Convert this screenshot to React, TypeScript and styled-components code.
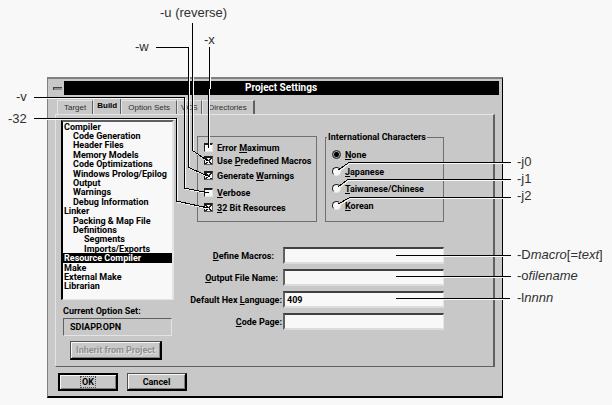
import React, { useState } from 'react';
import styled, { createGlobalStyle } from 'styled-components';

const face = '#c8c8c8';
const paper = '#f8f8f8';
const light = '#e4e4e4';
const dark = '#606060';

const GlobalStyle = createGlobalStyle`
  *, *::before, *::after { box-sizing: border-box; }
  body { margin: 0; background: ${paper}; }
  button, input, fieldset, legend { font: inherit; color: inherit; margin: 0; }
`;

const Figure = styled.main`
  position: relative;
  padding: 77px 109px 7px 47px;
  font: bold 9px/10px Roboto, 'Liberation Sans', Arial, sans-serif;
  color: #000;
`;

const Dialog = styled.section`
  padding: 2px 3px 5px;
  background: ${face};
  border: solid;
  border-width: 2px 1px 2px 1px;
  border-color: #808080 #000 #000 #808080;
`;

const TitleBar = styled.header`
  display: flex;
  height: 14px;
  background: #000;
  color: #fff;
`;

const SystemMenu = styled.button`
  display: grid;
  place-items: center;
  width: 13px;
  padding: 0;
  background: ${face};
  border: 0;
  &::after {
    content: '';
    width: 9px;
    height: 3px;
    background: #909090;
    border: solid #404040;
    border-width: 1px 0 0 1px;
  }
`;

const Title = styled.h1`
  flex: 1;
  margin: 0;
  padding-right: 1px;
  text-align: center;
  font-size: 10px;
  line-height: 14px;
`;

const Tabs = styled.div`
  display: flex;
  align-items: flex-end;
  height: 19px;
  padding-left: 6px;
`;

const Tab = styled.button<{ $active: boolean; $narrow: boolean }>`
  height: ${p => (p.$active ? 17 : 14)}px;
  padding: 0 ${p => (p.$narrow ? 3 : 6)}px;
  background: ${face};
  border: solid;
  border-width: 1px 1px 0 1px;
  border-color: ${light} ${dark} ${light} ${light};
  font-family: 'Liberation Sans', Arial, sans-serif;
  font-weight: ${p => (p.$active ? 'bold' : 'normal')};
  font-size: 8px;
  white-space: nowrap;
  color: ${p => (p.$active ? '#000' : '#303030')};
  &:last-child { border-right-width: 2px; }
`;

const Panel = styled.div`
  display: flex;
  gap: 15px;
  margin: 0 4px;
  padding: 5px 49px 6px 5px;
  border: solid;
  border-width: 1px 2px 1px 1px;
  border-color: ${light} ${dark} ${dark} ${light};
`;

const Sidebar = styled.div`
  display: flex;
  flex-direction: column;
  width: 113px;
`;

const Tree = styled.ul`
  display: grid;
  grid-template-rows: repeat(18, 1fr);
  height: 180px;
  margin: 0;
  padding: 0 0 8px;
  list-style: none;
  background: ${paper};
  border: solid;
  border-width: 2px 2px 1px 2px;
  border-color: ${dark} ${light} ${light} #000;
`;

const TreeItem = styled.li<{ $level: number; $selected: boolean }>`
  display: flex;
  align-items: center;
  min-height: 0;
  padding-left: ${p => [1, 10, 21][p.$level]}px;
  white-space: nowrap;
  cursor: default;
  background: ${p => (p.$selected ? '#000' : 'transparent')};
  color: ${p => (p.$selected ? '#fff' : '#000')};
`;

const Caption = styled.label`
  margin: 6px 0 2px 2px;
`;

const OptionSet = styled.output`
  height: 18px;
  margin: 0 2px;
  padding: 0 6px;
  line-height: 16px;
  border: 1px solid;
  border-color: ${dark} ${light} ${light} ${dark};
`;

const PushButton = styled.button<{ $default?: boolean }>`
  min-width: 60px;
  height: 18px;
  padding: 0 5px;
  line-height: 12px;
  white-space: nowrap;
  background: ${face};
  border: solid;
  border-width: ${p => (p.$default ? '2px' : '1px 2px 2px 1px')};
  border-color: ${p => (p.$default ? '#000' : '#505050 #000 #000 #505050')};
  box-shadow: inset 1px 1px 0 ${paper}, inset -1px -1px 0 #808080;
  &:disabled { color: #909090; text-shadow: 1px 1px 0 ${light}; }
`;

const Inherit = styled(PushButton)`
  align-self: flex-start;
  min-width: 91px;
  height: 19px;
  margin: 5px 0 0 9px;
`;

const Focus = styled.span`
  padding: 0 1px;
  outline: 1px dotted #505050;
`;

const Settings = styled.div`
  flex: 1;
  min-width: 0;
`;

const Groups = styled.div`
  display: grid;
  grid-template-columns: 120fr 119fr;
  align-items: end;
  gap: 8px;
  padding: 12px 0 0 8px;
`;

const Group = styled.fieldset`
  min-width: 0;
  padding: 4px 0 7px 6px;
  border: 1px solid #707070;
`;

const Legend = styled.legend`
  margin-left: -5px;
  padding: 0 1px;
  white-space: nowrap;
`;

const CheckRows = styled.div`
  display: grid;
  grid-template-rows: 13px 13px 17px 17px 13px;
`;

const RadioRows = styled.div`
  display: grid;
  grid-auto-rows: 17px;
`;

const Choice = styled.label`
  display: flex;
  align-items: center;
  gap: 4px;
  white-space: nowrap;
`;

const Check = styled.input.attrs({ type: 'checkbox' })`
  appearance: none;
  flex: none;
  width: 9px;
  height: 9px;
  background: ${paper};
  border: solid;
  border-width: 2px 1px 1px 1px;
  border-color: #202020 ${light} ${light} #202020;
  &:checked {
    border-color: #202020 #606060 #606060 #202020;
    background:
      linear-gradient(45deg, transparent 45%, #202020 46%, #202020 54%, transparent 55%),
      linear-gradient(-45deg, transparent 45%, #202020 46%, #202020 54%, transparent 55%),
      ${paper};
  }
`;

const Radio = styled.input.attrs({ type: 'radio' })`
  appearance: none;
  flex: none;
  width: 9px;
  height: 9px;
  border-radius: 50%;
  background: ${paper};
  border: 1px solid;
  border-color: #202020 ${light} ${light} #202020;
  &:checked {
    border-color: #202020;
    background: radial-gradient(circle, #000 0 2px, #a0a0a0 3px);
  }
`;

const Fields = styled.div`
  display: grid;
  gap: 5px;
  margin-top: 25px;
`;

const Field = styled.div`
  display: grid;
  grid-template-columns: 93px 1fr;
  gap: 1px;
  align-items: center;
`;

const FieldLabel = styled.label<{ $space: number }>`
  padding-right: ${p => p.$space}px;
  text-align: right;
  white-space: nowrap;
`;

const TextBox = styled.input`
  width: 100%;
  min-width: 0;
  height: 17px;
  padding: 0 2px;
  background: ${paper};
  border: solid;
  border-width: 2px 1px 2px 2px;
  border-color: #404040 ${light} #dcdcdc ${dark};
  border-radius: 0;
  outline: 0;
`;

const Footer = styled.footer`
  display: flex;
  gap: 9px;
  padding: 6px 7px 0;
`;

const Leaders = styled.svg<{ $side: 'left' | 'right' }>`
  position: absolute;
  top: 0;
  ${p => p.$side}: 0;
  pointer-events: none;
  fill: none;
  shape-rendering: crispEdges;
`;

const Note = styled.span<{ $side: 'left' | 'right'; $x: number; $y: number }>`
  position: absolute;
  top: ${p => p.$y}px;
  ${p => p.$side}: ${p => p.$x}px;
  ${p => (p.$side === 'right' ? 'width: 95px;' : '')}
  font: normal 13px/16px 'Liberation Sans', Arial, sans-serif;
  white-space: nowrap;
  color: #303030;
`;

const tabs = ['Target', 'Build', 'Option Sets', 'VCS', 'Directories'];

const tree: [string, number][] = [
  ['Compiler', 0],
  ['Code Generation', 1],
  ['Header Files', 1],
  ['Memory Models', 1],
  ['Code Optimizations', 1],
  ['Windows Prolog/Epilog', 1],
  ['Output', 1],
  ['Warnings', 1],
  ['Debug Information', 1],
  ['Linker', 0],
  ['Packing & Map File', 1],
  ['Definitions', 1],
  ['Segments', 2],
  ['Imports/Exports', 2],
  ['Resource Compiler', 0],
  ['Make', 0],
  ['External Make', 0],
  ['Librarian', 0],
];

// An ampersand marks the access key that follows it.
const checks: [string, boolean][] = [
  ['Error &Maximum', false],
  ['Use &Predefined Macros', true],
  ['Generate &Warnings', true],
  ['&Verbose', false],
  ['&32 Bit Resources', true],
];

const languages = ['&None', '&Japanese', '&Taiwanese/Chinese', '&Korean'];

const fields = [
  { id: 'macros', label: '&Define Macros:', value: '', space: 8 },
  { id: 'output', label: '&Output File Name:', value: '', space: 4 },
  { id: 'language', label: 'Default Hex &Language:', value: '409', space: 0 },
  { id: 'page', label: '&Code Page:', value: '', space: 0 },
];

const leftLeaders = [
  '192.5,23 192.5,150.5 208,161',
  '156,47.5 188.5,47.5 188.5,167.5 210,177',
  '209.5,47 209.5,88',
  '208.5,88 208.5,148',
  '34,97.5 184.5,97.5 184.5,188 209,193',
  '34,118.5 176.5,118.5 176.5,201 208,208',
];

const rightLeaders = [
  '189,162.5 27,162.5 16,170',
  '189,179.5 26,179.5 16,187',
  '189,197.5 28,197.5 16,204',
  '74,255.5 189,255.5',
  '74,276.5 189,276.5',
  '74,298.5 188,298.5',
];

function KeyText({ text }: { text: string }) {
  const [before, after] = text.split('&');
  return (
    <span>
      {before}
      <u>{after[0]}</u>
      {after.slice(1)}
    </span>
  );
}

function LeaderLines({ side, width, lines }: { side: 'left' | 'right'; width: number; lines: string[] }) {
  return (
    <Leaders $side={side} width={width} height={320} aria-hidden="true">
      {lines.map(points => (
        <polyline key={points} points={points} stroke={paper} transform="translate(1 1)" />
      ))}
      {lines.map(points => (
        <polyline key={points} points={points} stroke="#000" />
      ))}
    </Leaders>
  );
}

export default function App() {
  const [tab, setTab] = useState('Build');
  const [selected, setSelected] = useState('Resource Compiler');

  return (
    <>
      <GlobalStyle />
      <Figure>
        <Dialog role="dialog" aria-labelledby="title">
          <TitleBar>
            <SystemMenu aria-label="System menu" />
            <Title id="title">Project Settings</Title>
          </TitleBar>
          <Tabs role="tablist">
            {tabs.map(name => (
              <Tab
                key={name}
                role="tab"
                aria-selected={name === tab}
                $active={name === tab}
                $narrow={name.length < 6}
                onClick={() => setTab(name)}
              >
                {name}
              </Tab>
            ))}
          </Tabs>
          <Panel role="tabpanel">
            <Sidebar>
              <Tree role="tree">
                {tree.map(([name, level]) => (
                  <TreeItem
                    key={name}
                    role="treeitem"
                    aria-level={level + 1}
                    aria-selected={name === selected}
                    $level={level}
                    $selected={name === selected}
                    onClick={() => setSelected(name)}
                  >
                    {name}
                  </TreeItem>
                ))}
              </Tree>
              <Caption htmlFor="option-set">Current Option Set:</Caption>
              <OptionSet id="option-set">SDIAPP.OPN</OptionSet>
              <Inherit disabled>Inherit from Project</Inherit>
            </Sidebar>
            <Settings>
              <Groups>
                <Group aria-label="Build options">
                  <CheckRows>
                    {checks.map(([label, on]) => (
                      <Choice key={label}>
                        <Check defaultChecked={on} />
                        <KeyText text={label} />
                      </Choice>
                    ))}
                  </CheckRows>
                </Group>
                <Group>
                  <Legend>International Characters</Legend>
                  <RadioRows>
                    {languages.map((label, i) => (
                      <Choice key={label}>
                        <Radio name="characters" defaultChecked={i === 0} />
                        <KeyText text={label} />
                      </Choice>
                    ))}
                  </RadioRows>
                </Group>
              </Groups>
              <Fields>
                {fields.map(f => (
                  <Field key={f.id}>
                    <FieldLabel htmlFor={f.id} $space={f.space}>
                      <KeyText text={f.label} />
                    </FieldLabel>
                    <TextBox id={f.id} defaultValue={f.value} />
                  </Field>
                ))}
              </Fields>
            </Settings>
          </Panel>
          <Footer>
            <PushButton $default>
              <Focus>OK</Focus>
            </PushButton>
            <PushButton>Cancel</PushButton>
          </Footer>
        </Dialog>

        <LeaderLines side="left" width={216} lines={leftLeaders} />
        <LeaderLines side="right" width={290} lines={rightLeaders} />

        <Note $side="left" $x={160} $y={5}>-u (reverse)</Note>
        <Note $side="left" $x={135} $y={39}>-w</Note>
        <Note $side="left" $x={204} $y={32}>-x</Note>
        <Note $side="left" $x={16} $y={89}>-v</Note>
        <Note $side="left" $x={8} $y={111}>-32</Note>
        <Note $side="right" $x={0} $y={154}>-j0</Note>
        <Note $side="right" $x={0} $y={171}>-j1</Note>
        <Note $side="right" $x={0} $y={188}>-j2</Note>
        <Note $side="right" $x={0} $y={247}>-D<i>macro</i>[=<i>text</i>]</Note>
        <Note $side="right" $x={0} $y={268}>-o<i>filename</i></Note>
        <Note $side="right" $x={0} $y={290}>-l<i>nnnn</i></Note>
      </Figure>
    </>
  );
}
